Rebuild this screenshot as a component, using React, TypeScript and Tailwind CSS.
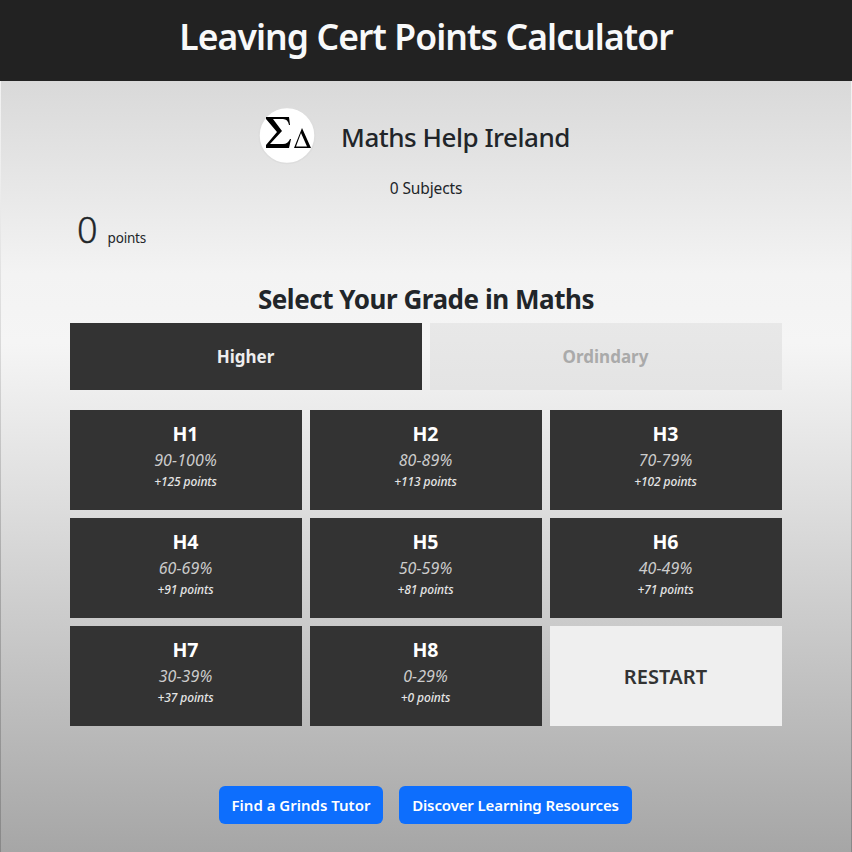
const grades = [
  ['H1', '90-100%', '+125 points'],
  ['H2', '80-89%', '+113 points'],
  ['H3', '70-79%', '+102 points'],
  ['H4', '60-69%', '+91 points'],
  ['H5', '50-59%', '+81 points'],
  ['H6', '40-49%', '+71 points'],
  ['H7', '30-39%', '+37 points'],
  ['H8', '0-29%', '+0 points'],
];

export default function App() {
  return (
    <div className="flex h-[852px] w-[852px] flex-col overflow-hidden bg-[#222] font-['Noto_Sans',sans-serif] text-[#212529]">
      <header className="flex h-[81px] shrink-0 justify-center pt-[15px]">
        <h1 className="text-[35.5px] leading-[43px] font-semibold tracking-[-0.92px] whitespace-nowrap text-[#f8f9fa]">Leaving Cert Points Calculator</h1>
      </header>
      <div className="flex grow bg-[linear-gradient(to_bottom,#f2f2f2_0%,#eeeeee_12%,#d8d8d8_35%,#a8a8a8_65%,#888888_100%)] px-px">
        <main className="flex grow flex-col bg-[linear-gradient(to_bottom,#d9d9d9_0%,#f3f3f3_25%,#f5f5f5_34%,#dcdcdc_56%,#a6a6a6_100%)] px-[69px]">
          <div className="mt-[26px] flex h-[58px] items-center pl-[188px]">
            <svg viewBox="0 0 58 58" className="size-[58px]">
              <circle cx="29" cy="28.5" r="28" fill="#fff" stroke="#ddd" strokeWidth="1.5" />
              <path d="M8 10H31L32 18H31Q30 12 25 12H15L24 24L12 37H25Q30 37 32 32H33L31 41H8V38L19 25L8 12Z" />
              <path fillRule="evenodd" d="M44 21L53 41H36ZM43 26L38 39.5H49Z" />
            </svg>
            <h2 className="relative top-px ml-[25px] text-[26px] font-medium tracking-[-0.48px] whitespace-nowrap">Maths Help Ireland</h2>
          </div>
          <p className="mt-[11px] text-center text-[15.5px] leading-6 tracking-[-0.12px]">0 Subjects</p>
          <div className="mt-[2px] ml-[7px] flex h-[58px] items-baseline gap-[10px]">
            <span className="text-[36px] leading-[56px] font-light [-webkit-text-stroke:0.4px_#212529]">0</span>
            <span className="text-[13.5px] tracking-[-0.2px]">points</span>
          </div>
          <h3 className="mt-[24px] h-[39px] text-center text-[26px] leading-[30px] font-bold tracking-[-0.46px]">Select Your Grade in Maths</h3>
          <div className="grid h-[67px] grid-cols-2 gap-2 text-[17px] font-bold">
            <button className="bg-[#333] pr-px text-[#eee]">Higher</button>
            <button className="bg-linear-to-b from-[#e8e8e8] to-[#e4e4e4] pr-px text-[#aaa]">Ordindary</button>
          </div>
          <div className="mt-5 grid grid-cols-3 gap-2">
            {grades.map(([name, range, points]) => (
              <button key={name} className="flex h-[100px] flex-col items-center bg-[#333] pt-[9px] pr-px text-white">
                <span className="text-[19.5px] leading-[29px] font-bold">{name}</span>
                <span className="text-[16px] leading-6 tracking-[0.1px] text-[#ccc] italic">{range}</span>
                <span className="mt-px text-[12px] leading-[18px] font-medium tracking-[-0.1px] text-[#e5e5e5] italic">{points}</span>
              </button>
            ))}
            <button className="h-[100px] bg-[#efefef] pt-[2px] pr-px text-[20px] font-semibold tracking-[0.1px] text-[#333]">RESTART</button>
          </div>
          <div className="mt-[60px] flex justify-center gap-4 pr-px text-[15px] font-semibold text-white">
            <button className="h-[38px] w-[164px] rounded-md bg-[#0d6efd]">Find a Grinds Tutor</button>
            <button className="h-[38px] w-[233px] rounded-md bg-[#0d6efd] tracking-[-0.12px]">Discover Learning Resources</button>
          </div>
        </main>
      </div>
    </div>
  );
}
